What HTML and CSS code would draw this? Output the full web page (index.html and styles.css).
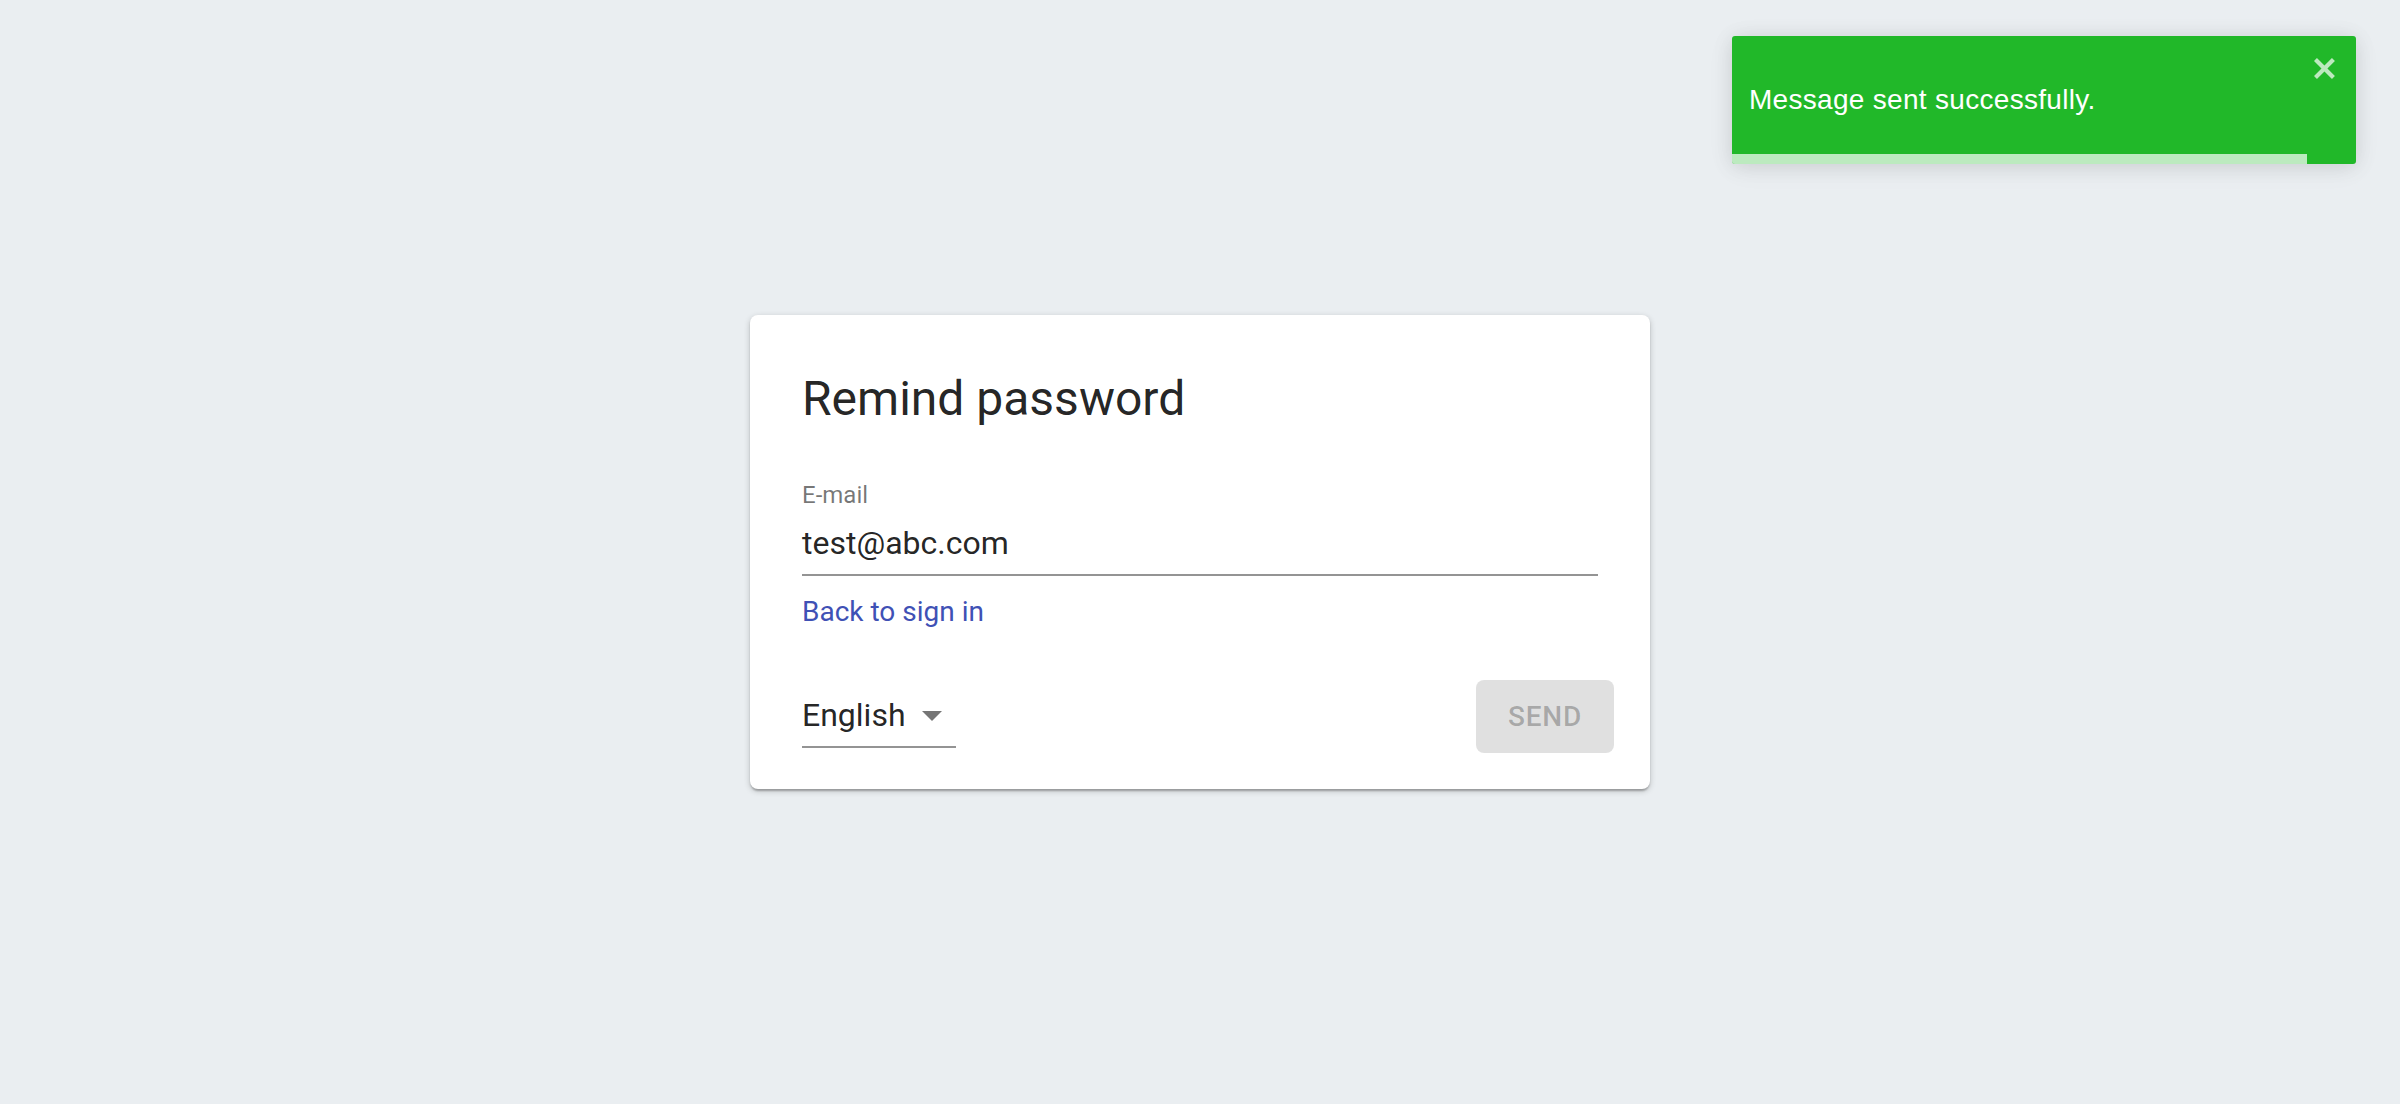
FILE: index.html
```html
<!DOCTYPE html>
<html lang="en">
<head>
<meta charset="utf-8">
<title>Remind password</title>
<link rel="stylesheet" href="styles.css">
</head>
<body>
<main class="page">
  <section class="card">
    <div class="card-content">
      <h1 class="title">Remind password</h1>
      <div class="field">
        <label class="field-label">E-mail</label>
        <div class="field-input">test@abc.com</div>
      </div>
      <a class="link" href="#">Back to sign in</a>
    </div>
    <div class="card-actions">
      <div class="select">
        <span class="select-value">English</span>
        <svg class="select-icon" viewBox="0 0 24 24" width="48" height="48"><path d="M7 10l5 5 5-5z"/></svg>
      </div>
      <button class="btn" disabled>Send</button>
    </div>
  </section>
</main>
<div class="toast">
  <div class="toast-body">Message sent successfully.</div>
  <button class="toast-close" aria-label="close">
    <svg viewBox="0 0 14 16" width="28" height="32"><path fill-rule="evenodd" d="M7.71 8.23l3.75 3.75-1.48 1.48-3.75-3.75-3.75 3.75L1 11.98l3.75-3.75L1 4.48 2.48 3l3.75 3.75L9.98 3l1.48 1.48-3.75 3.75z"/></svg>
  </button>
  <div class="toast-progress" style="width: 92.1%"></div>
</div>
</body>
</html>
```
FILE: styles.css
```css
* { box-sizing: border-box; }
html, body { margin: 0; padding: 0; }
body {
  background: #eaeef1;
  font-family: Roboto, "Liberation Sans", sans-serif;
  color: rgba(0,0,0,0.87);
}
.page {
  min-height: 100vh;
  display: flex;
  align-items: center;
  justify-content: center;
}
.card {
  width: 900px;
  background: #fff;
  border-radius: 8px;
  box-shadow: 0 2px 6px rgba(0,0,0,0.2), 0 2px 2px rgba(0,0,0,0.14), 0 4px 2px -2px rgba(0,0,0,0.12);
  padding-top: 56px;
  padding-bottom: 36px;
}
.card-content {
  padding: 0 52px 0 52px;
  display: flex;
  flex-direction: column;
}
.title {
  margin: 0;
  font-size: 48px;
  line-height: 56px;
  font-weight: 400;
  color: rgba(0,0,0,0.87);
}
.field {
  margin-top: 54px;
  display: flex;
  flex-direction: column;
}
.field-label {
  font-size: 24px;
  line-height: 28px;
  color: rgba(0,0,0,0.54);
}
.field-input {
  margin-top: 15px;
  font-size: 32px;
  line-height: 38px;
  padding-bottom: 12px;
  border-bottom: 2px solid rgba(0,0,0,0.42);
  color: rgba(0,0,0,0.87);
}
.link {
  margin-top: 20px;
  font-size: 28px;
  line-height: 32px;
  color: #3f51b5;
  text-decoration: none;
  align-self: flex-start;
}
.card-actions {
  margin-top: 52px;
  padding: 0 36px 0 52px;
  display: flex;
  justify-content: space-between;
  align-items: flex-start;
}
.select {
  margin-top: 11px;
  width: 154px;
  display: flex;
  align-items: center;
  padding-bottom: 7px;
  border-bottom: 2px solid rgba(0,0,0,0.42);
}
.select-value {
  font-size: 32px;
  line-height: 38px;
  color: rgba(0,0,0,0.87);
}
.select-icon {
  margin-left: auto;
  fill: rgba(0,0,0,0.54);
  display: block;
}
.btn {
  width: 138px;
  height: 73px;
  border: 0;
  border-radius: 8px;
  background: rgba(0,0,0,0.12);
  color: rgba(0,0,0,0.26);
  font-family: Roboto, sans-serif;
  font-weight: 500;
  font-size: 28px;
  letter-spacing: 0.8px;
  text-transform: uppercase;
  display: flex;
  align-items: center;
  justify-content: center;
  padding: 0;
}
.toast {
  position: absolute;
  top: 36px;
  right: 44px;
  width: 624px;
  height: 128px;
  background: #21b829;
  border-radius: 3px;
  box-shadow: 0 2px 20px rgba(0,0,0,0.1), 0 4px 30px rgba(0,0,0,0.05);
  display: flex;
  align-items: center;
  padding-left: 17px;
  overflow: hidden;
}
.toast-body {
  flex: 1;
  font-family: "Liberation Sans", Arial, sans-serif;
  font-size: 28px;
  line-height: 32px;
  letter-spacing: 0.3px;
  color: #fff;
}
.toast-close {
  align-self: flex-start;
  margin-top: 16px;
  margin-right: 16px;
  padding: 0;
  border: 0;
  background: transparent;
  fill: #fff;
  opacity: 0.7;
  display: block;
}
.toast-close svg { display: block; }
.toast-progress {
  position: absolute;
  left: 0;
  bottom: 0;
  height: 10px;
  background: rgba(255,255,255,0.7);
}
```
